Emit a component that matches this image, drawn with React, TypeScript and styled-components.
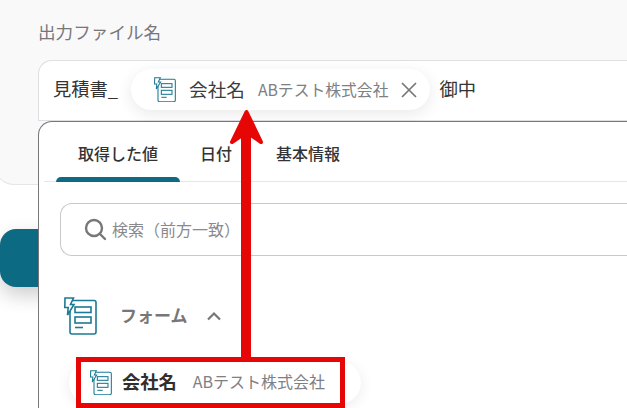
import styled, { createGlobalStyle } from 'styled-components';

const FONT = '"Noto Sans CJK JP", "Noto Sans", sans-serif';

const GlobalStyle = createGlobalStyle`
  html, body {
    margin: 0;
    padding: 0;
    background: #fff;
    font-family: ${FONT};
  }
`;

const Page = styled.div`
  position: relative;
  width: 627px;
  height: 408px;
  overflow: hidden;
  background: #fff;
`;

const Card = styled.section`
  height: 185px;
  box-sizing: border-box;
  margin-left: -6px;
  padding: 20px 0 0 43px;
  background: #f9f9fa;
  border: 1px solid #e6e6e8;
  border-top: 0;
  border-right: 0;
  border-bottom-left-radius: 20px;
`;

const Label = styled.div`
  font-size: 17.6px;
  line-height: 24px;
  color: #77777a;
`;

const Field = styled.div`
  display: flex;
  align-items: center;
  height: 61px;
  box-sizing: border-box;
  margin-top: 16px;
  padding: 0 0 0 14px;
  background: #fff;
  border: 1px solid #dfdfe3;
  border-right: 0;
  border-top-left-radius: 14px;
  font-size: 18.3px;
  color: #333;
`;

const FieldText = styled.span`
  line-height: 24px;
  margin-top: -6px;
`;

const Chip = styled.div`
  display: flex;
  align-items: center;
  height: 41px;
  box-sizing: border-box;
  margin: -2px 9px 0 13px;
  padding: 0 13px 0 23px;
  background: #fff;
  border-radius: 21px;
  box-shadow: 0 4px 16px rgba(0, 0, 0, 0.09);
`;

const ChipName = styled.span`
  margin: -3px 0 0 13px;
  font-size: 18.6px;
  color: #3c3c3e;
`;

const ChipValue = styled.span`
  margin: -1px 0 0 13px;
  font-size: 15.8px;
  color: #808083;
`;

const Popup = styled.section`
  position: relative;
  margin: -64px 0 0 38px;
  height: 300px;
  background: #fff;
  border: 1px solid #77777a;
  border-right: 0;
  border-top-left-radius: 14px;
`;

const Tabs = styled.nav`
  display: flex;
  height: 60px;
  margin-left: 5px;
  box-sizing: border-box;
  border-bottom: 1px solid #e6e6e8;
`;

const Tab = styled.div<{ $active?: boolean; $width: number }>`
  position: relative;
  width: ${(p) => p.$width}px;
  display: flex;
  justify-content: center;
  padding: 19px 0 0 ${(p) => (p.$active ? 12 : 0)}px;
  box-sizing: border-box;
  font-size: 16px;
  line-height: 24px;
  font-weight: 500;
  color: #333;

  ${(p) =>
    p.$active &&
    `
    &::after {
      content: '';
      position: absolute;
      left: 12px;
      right: 0;
      bottom: -1px;
      height: 5px;
      background: #0c6a82;
      border-radius: 5px 5px 0 0;
    }
  `}
`;

const Search = styled.div`
  display: flex;
  align-items: center;
  height: 53px;
  box-sizing: border-box;
  margin: 21px 0 0 21px;
  padding-left: 23px;
  border: 1px solid #c9c9cc;
  border-right: 0;
  border-radius: 12px 0 0 12px;
  font-size: 16px;
  color: #8a8a8d;
`;

const SearchText = styled.span`
  margin: -1px 0 0 5px;
`;

const Group = styled.div`
  display: flex;
  align-items: center;
  margin: 41px 0 0 25px;
  height: 38px;
`;

const GroupName = styled.span`
  margin: -3px 0 0 23px;
  font-size: 17px;
  font-weight: 700;
  color: #77777a;
`;

const Chevron = styled.svg`
  margin-left: 18px;
  width: 16px;
  height: 10px;
`;

const Item = styled.div`
  display: flex;
  align-items: center;
  width: 292px;
  height: 43px;
  box-sizing: border-box;
  margin: 26px 0 0 30px;
  padding-left: 21px;
  background: #fff;
  border-radius: 22px;
  box-shadow: 0 3px 14px rgba(0, 0, 0, 0.08);
`;

const ItemName = styled.span`
  margin: -3px 0 0 10px;
  font-size: 18.3px;
  font-weight: 700;
  color: #2f2f31;
`;

const ItemValue = styled.span`
  margin: -3px 0 0 16px;
  font-size: 16px;
  color: #808083;
`;

const SideButton = styled.div`
  position: absolute;
  left: 0;
  top: 229px;
  width: 70px;
  height: 58px;
  background: #0c6a82;
  border-radius: 16px;
  box-shadow: 0 8px 20px rgba(0, 0, 0, 0.2);
`;

const CloseMark = styled.svg`
  margin-left: 13px;
  width: 16px;
  height: 16px;
`;

const Highlight = styled.div`
  position: absolute;
  left: 76px;
  top: 357px;
  width: 269px;
  height: 51px;
  box-sizing: border-box;
  border: 5px solid #e60606;
`;

const ArrowDrawing = styled.svg`
  position: absolute;
  left: 225px;
  top: 105px;
  width: 50px;
  height: 255px;
`;

const FormIcon = ({ size }: { size: number }) => (
  <svg width={size} height={(size * 38) / 33} viewBox="0 0 33 38" fill="none" stroke="#1c7a94" strokeWidth="1.6">
    <path d="M8 3.5 H30 Q32 3.5 32 5.5 V35 Q32 37 30 37 H8 Q6 37 6 35 V13" />
    <path d="M1 1 H9.5 L6.5 7.5 H10 L3.5 18 L4.2 10.5 H0.8 Z" fill="#fff" />
    <rect x="11" y="10" width="16" height="5.5" />
    <rect x="11" y="20" width="16" height="6" />
    <path d="M11 30.5 H19" />
  </svg>
);

const SearchIcon = () => (
  <svg width="23" height="23" viewBox="0 0 23 23" fill="none" stroke="#77777a" strokeWidth="2.4" strokeLinecap="round">
    <circle cx="10" cy="10" r="8" />
    <path d="M16 16 L21 21" />
  </svg>
);

const App = () => (
  <Page>
    <GlobalStyle />
    <Card>
      <Label>出力ファイル名</Label>
      <Field>
        <FieldText>見積書_</FieldText>
        <Chip>
          <FormIcon size={22} />
          <ChipName>会社名</ChipName>
          <ChipValue>ABテスト株式会社</ChipValue>
          <CloseMark viewBox="0 0 16 16" fill="none" stroke="#77777a" strokeWidth="1.7">
            <path d="M1 1 L15 15 M15 1 L1 15" />
          </CloseMark>
        </Chip>
        <FieldText>御中</FieldText>
      </Field>
    </Card>
    <SideButton />
    <Popup>
      <Tabs>
        <Tab $active $width={136}>取得した値</Tab>
        <Tab $width={72}>日付</Tab>
        <Tab $width={112}>基本情報</Tab>
      </Tabs>
      <Search>
        <SearchIcon />
        <SearchText>検索（前方一致）</SearchText>
      </Search>
      <Group>
        <FormIcon size={33} />
        <GroupName>フォーム</GroupName>
        <Chevron viewBox="0 0 16 10" fill="none" stroke="#77777a" strokeWidth="2.2">
          <path d="M2 8.5 L8 2.5 L14 8.5" />
        </Chevron>
      </Group>
      <Item>
        <FormIcon size={22} />
        <ItemName>会社名</ItemName>
        <ItemValue>ABテスト株式会社</ItemValue>
      </Item>
    </Popup>
    <Highlight />
    <ArrowDrawing viewBox="0 0 50 255" fill="none" stroke="#e60606" strokeLinecap="round" strokeLinejoin="round">
      <path d="M21 28 V254" strokeWidth="10" strokeLinecap="butt" />
      <path d="M21.5 7 L7 37 L21.5 27 L36 37 Z" fill="#e60606" strokeWidth="4" />
    </ArrowDrawing>
  </Page>
);

export default App;
